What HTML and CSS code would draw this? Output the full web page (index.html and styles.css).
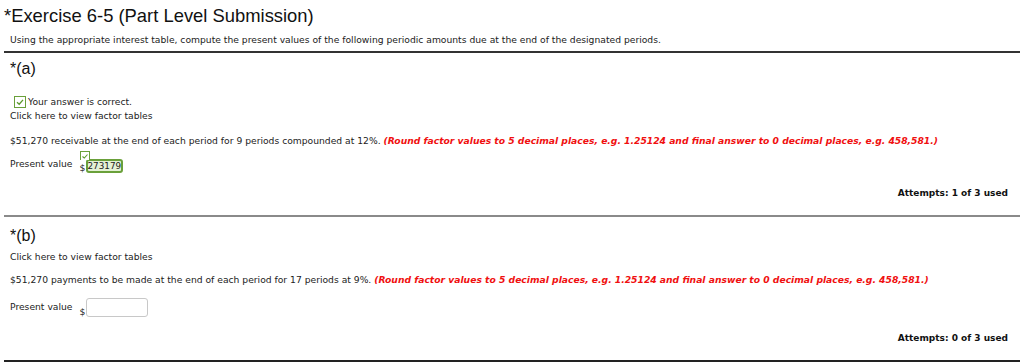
FILE: index.html
```html
<!DOCTYPE html>
<html>

	<head>
		<meta charset="UTF-8">
		<title>Exercise 6-5</title>
		<link rel="stylesheet" href="styles.css">
	</head>

	<body>
		<div class="page">
			<div class="header">
				<h1 class="title">*Exercise 6-5 (Part Level Submission)</h1>
				<p class="intro">Using the appropriate interest table, compute the present values of the following periodic amounts due at the end of the designated periods.</p>
			</div>

			<!-- part a -->
			<div class="part part-a">
				<h2 class="part-label">*(a)</h2>
				<p class="status">
					<span class="check-box">
						<svg width="10" height="10" viewBox="0 0 10 10"><path d="M2 5.2 L4.2 7.2 L8 2.8" fill="none" stroke="#5c9a2c" stroke-width="1.3"/></svg>
					</span>Your answer is correct.
				</p>
				<p class="link">Click here to view factor tables</p>
				<p class="question">$51,270 receivable at the end of each period for 9 periods compounded at 12%. <span class="hint">(Round factor values to 5 decimal places, e.g. 1.25124 and final answer to 0 decimal places, e.g. 458,581.)</span></p>
				<div class="answer">
					<span class="answer-label">Present value</span>
					<span class="field">
						<span class="cur">$</span>
						<span class="input correct">273179</span>
						<span class="field-check">
							<svg width="8" height="7" viewBox="0 0 8 7"><path d="M1.5 3.5 L3.3 5 L6.5 1.5" fill="none" stroke="#5c9a2c" stroke-width="1.1"/></svg>
						</span>
					</span>
				</div>
				<p class="attempts">Attempts: 1 of 3 used</p>
			</div>

			<!-- part b -->
			<div class="part part-b">
				<h2 class="part-label">*(b)</h2>
				<p class="link">Click here to view factor tables</p>
				<p class="question">$51,270 payments to be made at the end of each period for 17 periods at 9%. <span class="hint">(Round factor values to 5 decimal places, e.g. 1.25124 and final answer to 0 decimal places, e.g. 458,581.)</span></p>
				<div class="answer">
					<span class="answer-label">Present value</span>
					<span class="field">
						<span class="cur">$</span>
						<span class="input empty"></span>
					</span>
				</div>
				<p class="attempts">Attempts: 0 of 3 used</p>
			</div>
		</div>
	</body>

</html>
```

FILE: styles.css
```css
body {
	margin: 0;
	background: #fff;
	color: #222;
	font-family: "DejaVu Sans", Verdana, sans-serif;
	font-size: 9.2px;
}

p {
	margin: 0;
}

.page {
	padding: 4px 4px 0;
}

.header {
	padding-bottom: 5px;
	border-bottom: 2px solid #333;
}

.title {
	margin: 0;
	font-family: "Liberation Sans", Arial, sans-serif;
	font-size: 18.4px;
	font-weight: normal;
	line-height: 24px;
	color: #111;
}

.intro {
	margin-top: 6px;
	padding-left: 6px;
	line-height: 12px;
}

.part {
	padding: 6px 0 15px 6px;
	border-bottom: 2px solid #8a8a8a;
}

.part-b {
	padding-top: 9px;
	border-bottom-color: #222;
}

.part-label {
	margin: 0;
	font-family: "Liberation Sans", Arial, sans-serif;
	font-size: 16px;
	font-weight: normal;
	line-height: 20px;
	color: #111;
}

.status {
	display: flex;
	align-items: center;
	margin-top: 16px;
	line-height: 14px;
}

.check-box {
	display: flex;
	align-items: center;
	justify-content: center;
	box-sizing: border-box;
	width: 12px;
	height: 12px;
	margin: 0 2px 0 4px;
	border: 1px solid #6aa03a;
	background: #fff;
}

.link {
	line-height: 14px;
}

.part-b .link {
	margin-top: 4px;
}

.question {
	margin-top: 11px;
	line-height: 14px;
}

.part-b .question {
	margin-top: 9px;
}

.hint {
	color: #f01010;
	font-weight: bold;
	font-style: italic;
}

.answer {
	display: flex;
	align-items: flex-start;
	margin-top: 8px;
	height: 20px;
}

.part-b .answer {
	margin-top: 11px;
	height: 21px;
}

.answer-label {
	margin-top: 1px;
	line-height: 14px;
}

.part-b .answer-label {
	margin-top: 2px;
}

.field {
	position: relative;
	display: flex;
	align-items: flex-end;
	margin: 3px 0 0 7px;
}

.part-b .field {
	margin-top: 0;
}

.cur {
	width: 6px;
	line-height: 12px;
	margin-bottom: -1px;
}

.input {
	box-sizing: border-box;
	display: block;
}

.input.correct {
	height: 14px;
	padding: 0;
	border: 2px solid #6aa03a;
	border-radius: 3px;
	background: #e4f1d6;
	line-height: 10px;
	font-size: 8.8px;
	color: #222;
}

.input.empty {
	width: 62px;
	height: 19px;
	border: 1px solid #c8c8c8;
	border-radius: 3px;
	background: #fff;
}

/* small tick that sits on the correct field */
.field-check {
	position: absolute;
	top: -8px;
	left: 0;
	display: flex;
	align-items: center;
	justify-content: center;
	box-sizing: border-box;
	width: 10px;
	height: 9px;
	border: 1px solid #6aa03a;
	border-bottom: none;
	background: #fff;
}

.attempts {
	margin-top: 10px;
	padding-right: 12px;
	line-height: 14px;
	text-align: right;
	font-size: 9px;
	font-weight: bold;
	color: #111;
}

.part-b .attempts {
	margin-top: 12px;
}
```
